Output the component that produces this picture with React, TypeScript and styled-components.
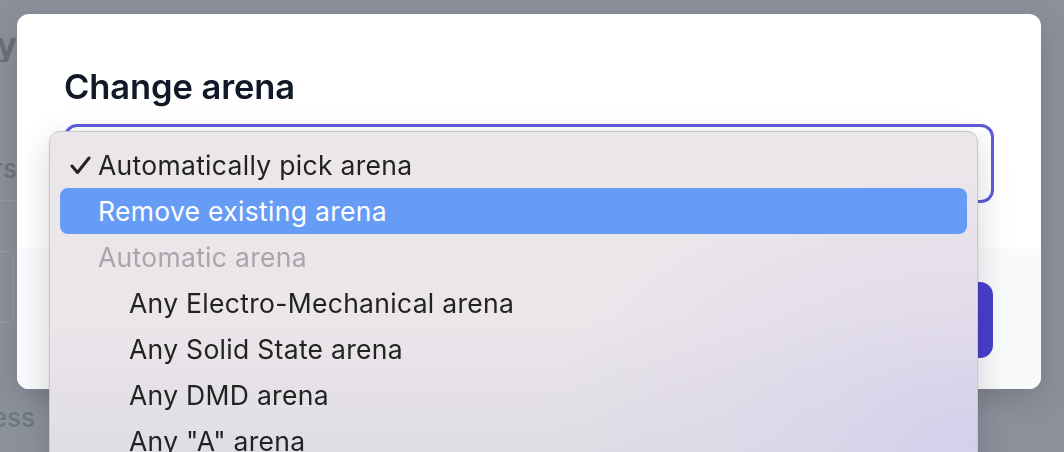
import styled, { createGlobalStyle } from "styled-components";

const GlobalStyle = createGlobalStyle`
  html, body {
    margin: 0;
    padding: 0;
    overflow: hidden;
  }
  body {
    background: #8c909b;
    font-family: "Inter", "Noto Sans", sans-serif;
  }
`;

const Page = styled.div`
  width: 1064px;
  height: 452px;
  display: flex;
  flex-direction: column;
`;

const BgColumn = styled.div`
  width: 17px;
  display: flex;
  flex-direction: column;
`;

const BgText = styled.div<{ $size: number; $top: number; $color: string; $weight?: number; $width?: number }>`
  width: ${(p) => p.$width ?? 17}px;
  overflow: hidden;
  display: flex;
  justify-content: flex-end;
  white-space: nowrap;
  margin-top: ${(p) => p.$top}px;
  font-size: ${(p) => p.$size}px;
  font-weight: ${(p) => p.$weight ?? 500};
  color: ${(p) => p.$color};
  line-height: 1;
`;

const BgRule = styled.div`
  width: 17px;
  height: 1px;
  margin-top: 18px;
  background: #979ba5;
`;

const BgInput = styled.div`
  margin-top: 50px;
  margin-left: -20px;
  width: 32px;
  height: 70px;
  border: 1px solid #9a9ea8;
  border-radius: 9px;
`;

const Modal = styled.div`
  position: fixed;
  top: 14px;
  left: 17px;
  width: 1024px;
  height: 375px;
  background: #ffffff;
  border-radius: 12px;
  overflow: hidden;
  display: flex;
  flex-direction: column;
  box-shadow: 0 10px 30px rgba(0, 0, 0, 0.15);
`;

const Body = styled.div`
  height: 235px;
  box-sizing: border-box;
  padding: 51px 47px 0 47px;
`;

const Title = styled.h2`
  margin: 0;
  font-size: 34.5px;
  font-weight: 600;
  color: #111827;
  letter-spacing: -0.1px;
  line-height: 44px;
`;

const SelectBox = styled.div`
  margin-top: 15px;
  height: 79px;
  box-sizing: border-box;
  border: 3px solid #5d5ddb;
  border-radius: 13px;
  background: #fff;
`;

const Footer = styled.div`
  flex: 1;
  background: #f9fafb;
  display: flex;
  justify-content: flex-end;
  align-items: flex-start;
  padding: 33px 48px 0 48px;
`;

const PrimaryButton = styled.button`
  width: 200px;
  height: 76px;
  border: none;
  border-radius: 13px;
  background: #4940cd;
  color: #fff;
  font-family: inherit;
  font-size: 24px;
`;

const Menu = styled.div`
  position: fixed;
  top: 131px;
  left: 49px;
  width: 929px;
  height: 340px;
  box-sizing: border-box;
  padding-top: 10px;
  border: 1px solid #cbc7cc;
  border-radius: 11px;
  background:
    radial-gradient(ellipse 440px 270px at 100% 92%, rgba(212, 206, 236, 0.95) 0%, rgba(216, 210, 236, 0.5) 45%, rgba(235, 230, 234, 0) 100%),
    linear-gradient(180deg, #ebe6ea 0%, #ebe6ea 55%, #dedce3 100%);
  box-shadow: 0 10px 34px rgba(0, 0, 0, 0.16), 0 0 0 0.5px rgba(0, 0, 0, 0.05);
`;

const Item = styled.div<{ $active?: boolean; $muted?: boolean; $indent?: boolean }>`
  height: 46px;
  margin: 0 10px;
  border-radius: 8px;
  display: flex;
  align-items: center;
  position: relative;
  padding-left: ${(p) => (p.$indent ? 69 : 38)}px;
  font-size: 26.5px;
  letter-spacing: 0.3px;
  color: ${(p) => (p.$active ? "#ffffff" : p.$muted ? "#a9a5aa" : "#222222")};
  background: ${(p) => (p.$active ? "#679cf6" : "transparent")};
  white-space: nowrap;
`;

const Check = styled.svg`
  position: absolute;
  left: 10px;
  top: 14px;
  width: 21px;
  height: 19px;
`;

const options = [
  "Any Electro-Mechanical arena",
  "Any Solid State arena",
  "Any DMD arena",
  'Any "A" arena',
];

export default function App() {
  return (
    <>
      <GlobalStyle />
      <Page>
        <BgColumn>
          <BgText $size={34} $top={28} $color="#6c707a" $weight={700}>
            yy
          </BgText>
          <BgText $size={26} $top={94} $color="#70747e">
            rs
          </BgText>
          <BgRule />
          <BgInput />
          <BgText $size={26} $top={82} $color="#6a7a80" $width={35}>
            ess
          </BgText>
        </BgColumn>
      </Page>
      <Modal>
        <Body>
          <Title>Change arena</Title>
          <SelectBox />
        </Body>
        <Footer>
          <PrimaryButton>Save</PrimaryButton>
        </Footer>
      </Modal>
      <Menu>
        <Item>
          <Check viewBox="0 0 21 19">
            <polyline
              points="2,10 7.5,16.5 19,2"
              fill="none"
              stroke="#222"
              strokeWidth="3"
              strokeLinecap="round"
              strokeLinejoin="round"
            />
          </Check>
          Automatically pick arena
        </Item>
        <Item $active>Remove existing arena</Item>
        <Item $muted>Automatic arena</Item>
        {options.map((o) => (
          <Item key={o} $indent>
            {o}
          </Item>
        ))}
      </Menu>
    </>
  );
}
